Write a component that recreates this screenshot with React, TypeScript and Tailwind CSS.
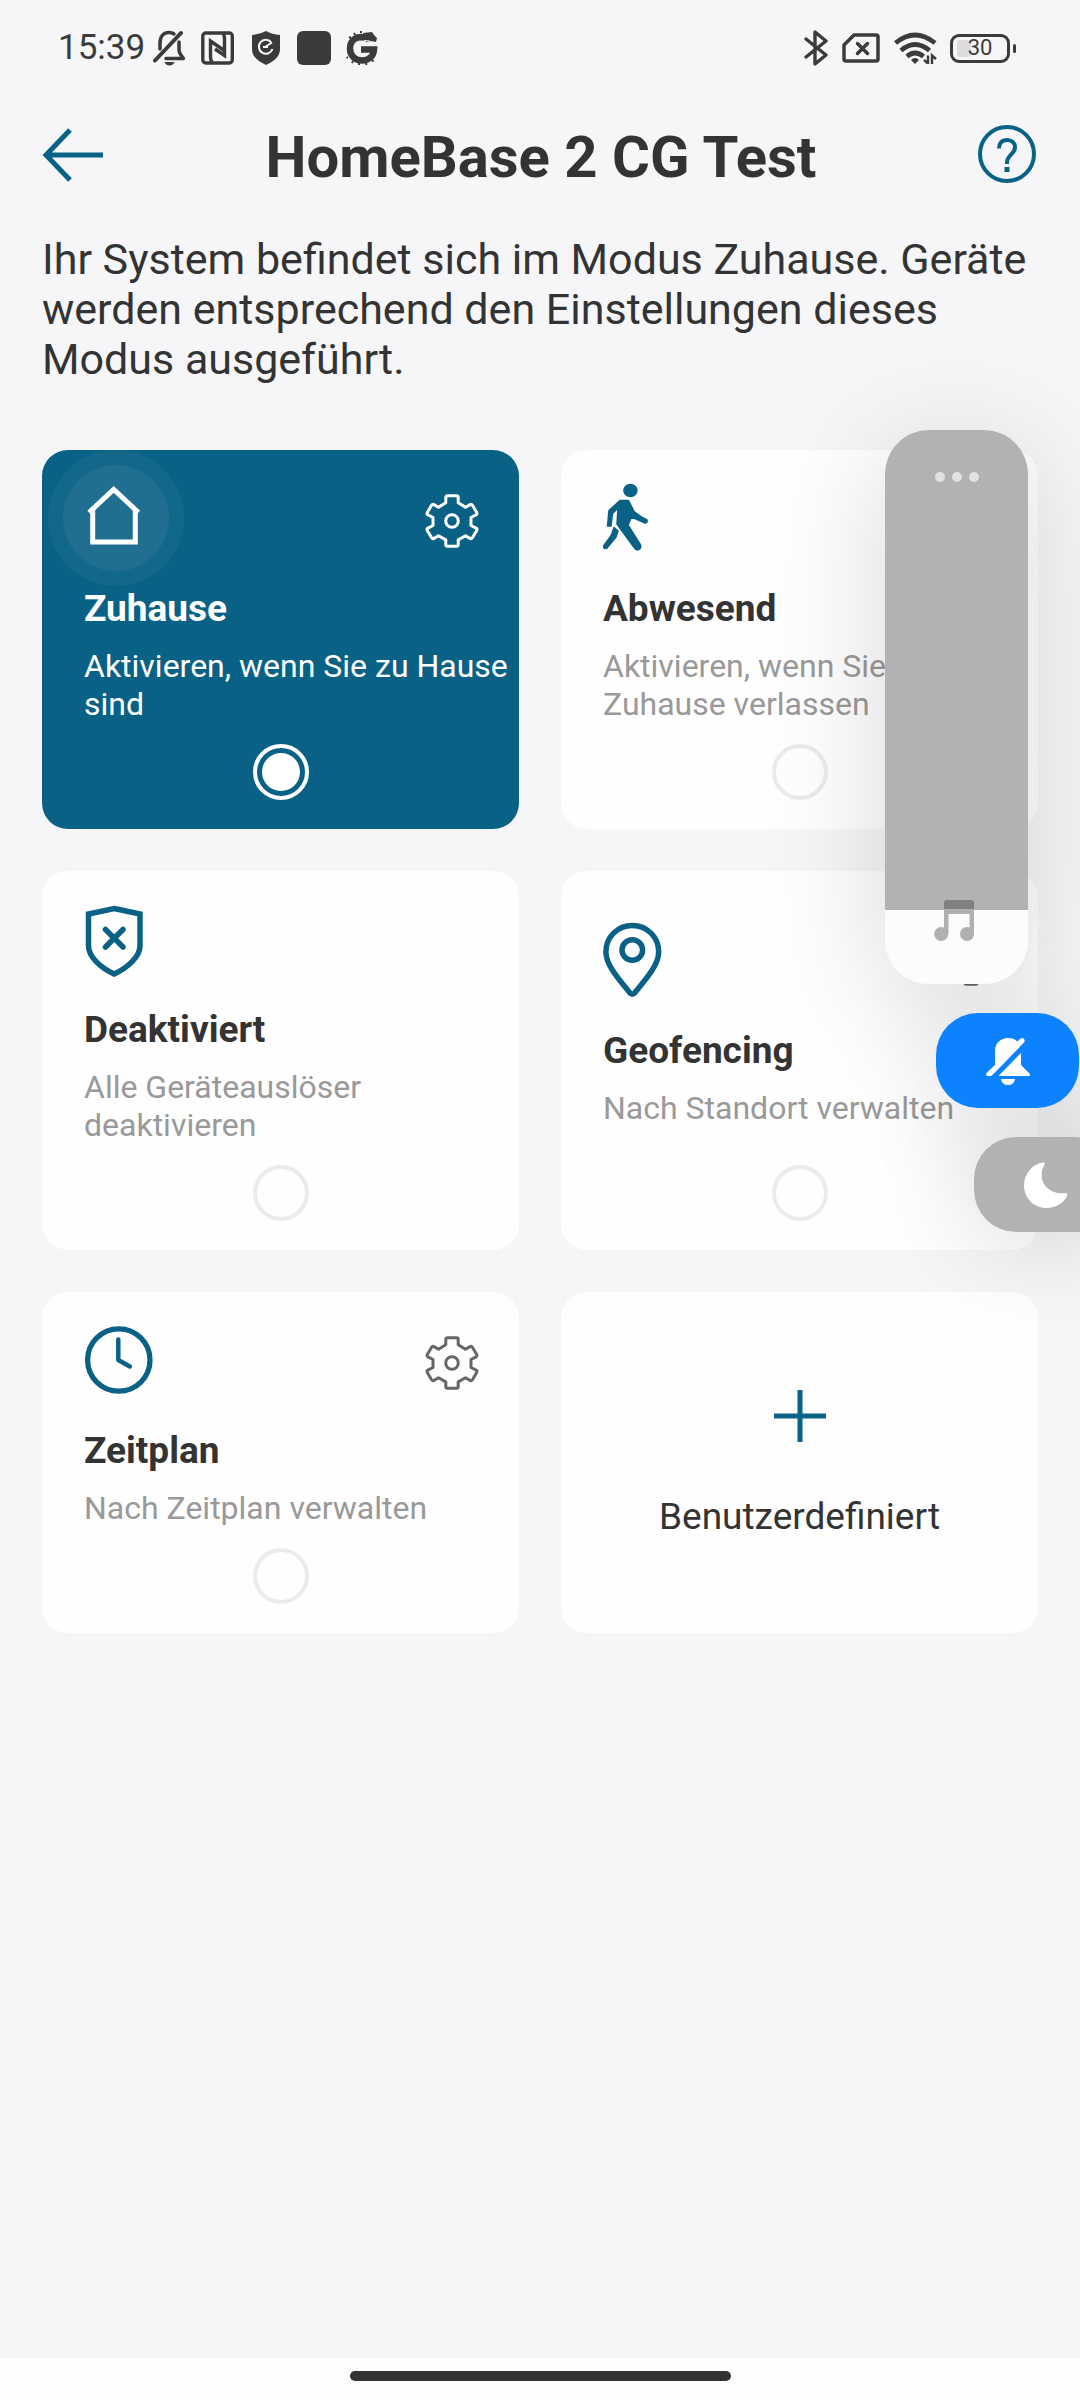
import { useState, type ReactNode } from "react";
import clsx from "clsx";

type ModeId = "home" | "away" | "disarmed" | "geofencing" | "schedule";

interface Mode {
  id: ModeId;
  title: string;
  description: string;
  icon: ReactNode;
  configurable: boolean;
}

const MODES: Mode[] = [
  { id: "home", title: "Zuhause", description: "Aktivieren, wenn Sie zu Hause sind", icon: <HouseIcon />, configurable: true },
  { id: "away", title: "Abwesend", description: "Aktivieren, wenn Sie das Zuhause verlassen", icon: <WalkIcon />, configurable: true },
  { id: "disarmed", title: "Deaktiviert", description: "Alle Geräteauslöser deaktivieren", icon: <ShieldIcon />, configurable: false },
  { id: "geofencing", title: "Geofencing", description: "Nach Standort verwalten", icon: <PinIcon />, configurable: true },
  { id: "schedule", title: "Zeitplan", description: "Nach Zeitplan verwalten", icon: <ClockIcon />, configurable: true },
];

export default function App() {
  const [active, setActive] = useState<ModeId>("home");

  return (
    <div className="relative flex min-h-screen flex-col overflow-hidden bg-[#f6f6f9] font-[Roboto,sans-serif] text-[#333333]">
      <StatusBar />

      <header className="flex h-[118px] items-center justify-between px-[42px]">
        <button aria-label="Zurück" className="text-[#0a6186]">
          <svg className="h-[60px] w-[62px]" viewBox="0 0 62 60" fill="none" stroke="currentColor" strokeWidth="5">
            <path d="M61 30H4M28 5L4 30l24 25" />
          </svg>
        </button>
        <h1 className="pt-1 text-[58px] leading-[66px] font-bold">HomeBase 2 CG Test</h1>
        <button aria-label="Hilfe" className="text-[#0a6186]">
          <svg className="h-[60px] w-[60px]" viewBox="0 0 60 60" fill="none" stroke="currentColor">
            <circle cx="29" cy="29" r="27" strokeWidth="4" />
            <path d="M21 23.500c0-5.500 3-8.500 8-8.500s8 3 8 7.500c0 6.500-8 7.500-8 15v1.500" strokeWidth="4" />
            <path d="M29 42v5" strokeWidth="5" />
          </svg>
        </button>
      </header>

      <main className="flex-1 px-[42px] pt-5">
        <p className="text-[43px] leading-[50px]">
          Ihr System befindet sich im Modus Zuhause. Geräte werden entsprechend den Einstellungen dieses Modus ausgeführt.
        </p>
        <div className="mt-[66px] grid grid-cols-2 gap-[42px]">
          {MODES.map((mode) => (
            <ModeCard key={mode.id} mode={mode} active={mode.id === active} onSelect={() => setActive(mode.id)} />
          ))}
          <button className="flex flex-col items-center justify-center gap-[52px] rounded-[26px] bg-[#fefefe] pt-1">
            <svg className="h-[52px] w-[52px]" viewBox="0 0 52 52" stroke="#0a6186" strokeWidth="5">
              <path d="M26 0v52M0 26h52" />
            </svg>
            <span className="text-[37px] leading-[46px]">Benutzerdefiniert</span>
          </button>
        </div>
      </main>

      <footer className="flex h-[42px] justify-center bg-[#fefefe] pt-[13px]">
        <div className="h-[10px] w-[381px] rounded-full bg-[#333333]" />
      </footer>

      <VolumeOverlay />
    </div>
  );
}

function ModeCard({ mode, active, onSelect }: { mode: Mode; active: boolean; onSelect: () => void }) {
  return (
    <section
      className={clsx(
        "relative flex flex-col overflow-hidden rounded-[26px] pt-8 pb-[29px] pl-[42px]",
        active ? "bg-[#0a6186] text-white" : "bg-[#fefefe]",
      )}
    >
      {active && (
        <div className="absolute top-0 left-[6px] flex h-[136px] w-[136px] items-center justify-center rounded-full bg-white/4">
          <div className="h-[106px] w-[106px] rounded-full bg-white/6" />
        </div>
      )}
      <div className="relative flex flex-1 flex-col justify-center">
        <div className={clsx("flex items-start justify-between pr-10", !active && "text-[#0a6186]")}>
          {mode.icon}
          {mode.configurable && (
            <button aria-label={`${mode.title} einstellen`} className={clsx("mt-3", active ? "text-white" : "text-[#666666]")}>
              <GearIcon />
            </button>
          )}
        </div>
        <label htmlFor={mode.id} className="mt-[26px] text-[37px] leading-[46px] font-bold">
          {mode.title}
        </label>
        <p className={clsx("mt-[15px] text-[32px] leading-[38px]", active ? "text-white" : "text-[#999999]")}>
          {mode.description}
        </p>
      </div>
      <div className="mt-[21px] flex justify-center pr-[42px]">
        <input
          type="radio"
          id={mode.id}
          name="mode"
          checked={active}
          onChange={onSelect}
          className="h-[56px] w-[56px] appearance-none rounded-full border-4 border-[#ebebeb] bg-clip-content p-[5px] checked:border-white checked:bg-white"
        />
      </div>
    </section>
  );
}

// The shadows sit on ::before layers so that no control darkens its neighbour.
function VolumeOverlay() {
  return (
    <aside className="absolute top-[430px] right-0 isolate flex flex-col items-end gap-[29px]">
      <div className="relative mr-[52px] h-[554px] w-[143px] before:absolute before:inset-0 before:-z-10 before:rounded-[44px] before:shadow-[0_20px_120px_rgba(0,0,0,0.15)]">
        <div className="flex h-full flex-col overflow-hidden rounded-[44px] bg-[#fcfcfc]">
          <div className="flex h-[480px] justify-center bg-[#b2b2b2] pt-[42px]">
            <svg className="h-[10px] w-[44px]" viewBox="0 0 44 10" fill="#e2e2e2">
              <circle cx="5" cy="5" r="5" />
              <circle cx="22" cy="5" r="5" />
              <circle cx="39" cy="5" r="5" />
            </svg>
          </div>
        </div>
        <svg className="absolute bottom-[43px] left-[49px] h-[41px] w-[40px]" viewBox="0 0 40 41" fill="#b0b0b0">
          <path d="M10 9h30v25h-4.500V14h-21v20H10z" />
          <path d="M10 9V3q0-3 3-3h24q3 0 3 3v6z" fill="#808080" />
          <circle cx="7.200" cy="34" r="7" />
          <circle cx="33" cy="34" r="7" />
        </svg>
        <input
          type="range"
          aria-label="Lautstärke"
          defaultValue={13}
          className="absolute inset-0 h-full w-full opacity-0 [writing-mode:vertical-lr]"
        />
      </div>
      <button
        aria-label="Stummschalten"
        className="relative mr-px flex h-[95px] w-[143px] items-center justify-center rounded-[42px] bg-[#0c82ff] before:absolute before:inset-0 before:-z-10 before:rounded-[42px] before:shadow-[0_10px_110px_rgba(0,0,0,0.14)]"
      >
        <svg className="h-[48px] w-[44px]" viewBox="0 0 44 48" fill="white">
          <path d="M9 28V14C9 6 15 1 22 1c4 0 7 1 9.500 3.500L34 2c3-3 6 1 4 3.500L7 37.500q-1.500 1.500-3 1.500H2c-2 0-2.500-2-1-3.500z" />
          <path d="M35 16v12l8.500 8.500q1.500 2.500-1 2.500H12.500z" />
          <path d="M15 42h14q-1 6-7 6t-7-6z" />
        </svg>
      </button>
      <button
        aria-label="Nicht stören"
        className="relative -mr-[37px] flex h-[95px] w-[143px] items-center justify-center rounded-[42px] bg-[#b2b2b2] before:absolute before:inset-0 before:-z-10 before:rounded-[42px] before:shadow-[0_0_110px_rgba(0,0,0,0.18)]"
      >
        <svg className="h-[46px] w-[44px]" viewBox="0 0 44 46" fill="white">
          <path d="M18.500 .5C8 2.500 0 12 0 23.500 0 36 10 46 22.500 46 32 46 40 41 43.300 33.500q.8-2.500-2-2.500C27 33 14 22 18.500 7l2-4.500q.5-2.500-2-2z" />
        </svg>
      </button>
    </aside>
  );
}

function StatusBar() {
  return (
    <div className="flex h-[96px] items-center justify-between pr-16 pl-[58px] text-[#3b3b3b]">
      <div className="flex items-center">
        <span className="w-[95px] text-[35px] leading-[42px]">15:39</span>
        <svg className="h-[36px] w-[33px]" viewBox="0 0 33 36" fill="none" stroke="currentColor" strokeWidth="3.500" strokeLinecap="round">
          <path d="M2 30.500L28 3" strokeWidth="4" />
          <path d="M7 19v-6C7 6 11 2.500 16 2.500q3 0 5 1.500" />
          <path d="M26 12v8q0 3 4.500 8.500H13" strokeLinejoin="round" />
          <path d="M11.500 32h10q-1.500 3.500-5 3.500t-5-3.500z" fill="currentColor" stroke="none" />
        </svg>
        <svg className="ml-[15px] h-[34px] w-[33px]" viewBox="0 0 33 34" fill="none" stroke="currentColor" strokeWidth="3.400">
          <rect x="1.800" y="2" width="29.500" height="30" rx="3" />
          <path d="M9.500 26.500V10l13 9M11.500 31q-2-1-2-5M23.500 7.500v17L14 18M22 3q1.500 1 1.500 5" />
        </svg>
        <svg className="ml-[18px] h-[34px] w-[28px]" viewBox="0 0 28 34">
          <path d="M14 0q6 3.500 14 4v14c0 8-6 12-14 16C6 30 0 26 0 18V4q8-.5 14-4z" fill="currentColor" />
          <path d="M19 11a7 7 0 1 0 1.500 7M13 16l7-4.500M11 16h5" fill="none" stroke="#f6f6f9" strokeWidth="2" />
        </svg>
        <div className="ml-[17px] h-[34px] w-[34px] rounded-[6px] bg-current" />
        <svg className="ml-[15px] h-[34px] w-[32px]" viewBox="0 0 32 34" fill="none" stroke="currentColor">
          <path d="M22 7.500C11 3.500 4 9 4 17.500 4 25 9.500 29.500 16 29.500s11.500-4 12-11H15" strokeWidth="6.500" />
          <path d="M5 7L3 6M9 4L8 2M15 2V0M2 26l-1.500 1M7 30l-1 2M13 32v2M20 32l.5 2M26 29l1.500 1.500" strokeWidth="2" />
          <path d="M17 2l9-1 2 3 3 3-1 4-5-1-5 1z" fill="currentColor" stroke="none" />
          <path d="M18 9.500l6 .5" stroke="#f6f6f9" strokeWidth="1.200" />
        </svg>
      </div>

      <div className="flex items-center">
        <svg className="h-[36px] w-[24px]" viewBox="0 0 24 36" fill="none" stroke="currentColor" strokeWidth="3.400" strokeLinejoin="round" strokeLinecap="round">
          <path d="M2 9l20 16-11 9V2l11 9L2 27" />
        </svg>
        <svg className="ml-[14px] h-[30px] w-[38px]" viewBox="0 0 38 30" fill="none" stroke="currentColor" strokeWidth="3.500" strokeLinejoin="round">
          <path d="M12 2h22q2 0 2 2v22q0 2-2 2H4q-2 0-2-2V12z" />
          <path d="M15.500 10.500l10 10M25.500 10.500l-10 10" strokeLinecap="round" />
        </svg>
        <svg className="ml-[14px] h-[32px] w-[43px]" viewBox="0 0 43 32" fill="none" stroke="currentColor" strokeWidth="4.800">
          <path d="M1.500 11Q21 -5 41 11M7 18.500Q21 6.500 35.500 18.500M13 24.500Q21 17.500 29.500 24.500" />
          <path d="M17 28q4-4 8 0l-4 4z" fill="currentColor" stroke="none" />
          <path d="M34 23.500V32M30 28l4 3.500M38 32v-8.500l4 3.500" strokeWidth="2.400" />
        </svg>
        <div className="ml-[13px] flex items-center gap-[3px]">
          <div className="flex h-[29px] w-[60px] items-center rounded-[9px] border-3 border-current">
            <div className="relative flex h-full w-full items-center justify-center">
              <div className="absolute left-[4px] h-[17px] w-[14px] rounded-[3px] bg-[#dcdcde]" />
              <span className="relative text-[22px] leading-[22px]">30</span>
            </div>
          </div>
          <div className="h-[9px] w-[3px] rounded-full bg-current" />
        </div>
      </div>
    </div>
  );
}

function HouseIcon() {
  return (
    <svg className="h-[78px] w-[78px]" viewBox="0 0 78 78" fill="none" stroke="currentColor" strokeWidth="5">
      <path d="M8.700 27v33h42.600V27" />
      <path d="M5 30.500L29.700 7.500 54.400 30.500" />
    </svg>
  );
}

function WalkIcon() {
  return (
    <svg className="h-[78px] w-[78px]" viewBox="0 0 78 78" fill="currentColor" stroke="currentColor" strokeWidth="1.500" strokeLinejoin="round">
      <ellipse cx="27.400" cy="8.500" rx="6.500" ry="6" />
      <path d="M17 18.500h8.500q2.500 5 5.500 11 6 5 13 8.500.5 3-2 3L28.500 35l-3.500 8 12.500 20q1 4-3 5-2 0-3-2L14 42l1-16-5.500 5.500L8 44H4.500L6 28.500z" />
      <path d="M11 45.500l4 3.500-2 6L4 66q-3.500 1.500-3.500-2L8.500 53z" />
    </svg>
  );
}

function ShieldIcon() {
  return (
    <svg className="h-[78px] w-[78px]" viewBox="0 0 78 78" fill="none" stroke="currentColor" strokeWidth="5.500">
      <path d="M30.200 5.500L56 11v32c0 11-13 22-25.800 28C17 65 4.500 54 4.500 43V11z" />
      <path d="M21.500 26.500L39 44M39 26.500L21.500 44" strokeLinecap="round" />
    </svg>
  );
}

function PinIcon() {
  return (
    <svg className="h-[82px] w-[78px]" viewBox="0 -2 78 82" fill="none" stroke="currentColor" strokeWidth="5.500">
      <path d="M29.300 3.500C44 3.500 55.700 15 55.700 30 55.700 43 43 57 32 70.500q-2.700 3.500-5.400 0C15.600 57 2.900 43 2.900 30 2.900 15 14.600 3.500 29.300 3.500z" />
      <circle cx="29.300" cy="28" r="10.300" />
    </svg>
  );
}

function ClockIcon() {
  return (
    <svg className="h-[78px] w-[78px]" viewBox="0 0 78 78" fill="none" stroke="currentColor" strokeWidth="5.300">
      <circle cx="34.800" cy="36" r="31.200" />
      <path d="M34.300 15.500V36l11.500 6.500" strokeWidth="4.500" strokeLinecap="round" strokeLinejoin="round" />
    </svg>
  );
}

function GearIcon() {
  return (
    <svg className="h-[54px] w-[54px]" viewBox="0 0 54 54" fill="none" stroke="currentColor" strokeWidth="3" strokeLinejoin="round">
      <path d="M22.500 1.800h9q1.700 0 1.700 1.700v5.200l7.300 4.500 4.500-2.600q1.500-.8 2.400.6l4.300 7.400q.8 1.500-.6 2.300L46 23.500v8l5.100 2.600q1.400.8.6 2.300l-4.300 7.400q-.9 1.400-2.400.6l-4.500-2.600-7.300 4.100v4.600q0 1.700-1.700 1.700h-9q-1.700 0-1.700-1.700v-4.600l-7.300-4.100L9 44.400q-1.500.8-2.400-.6l-4.300-7.400q-.8-1.500.6-2.300L8 31.500v-8l-5.100-2.600q-1.400-.8-.6-2.300l4.300-7.400q.9-1.400 2.400-.6l4.500 2.600 7.300-4.500V3.500q0-1.700 1.700-1.700z" />
      <circle cx="27" cy="27" r="6.300" />
    </svg>
  );
}
